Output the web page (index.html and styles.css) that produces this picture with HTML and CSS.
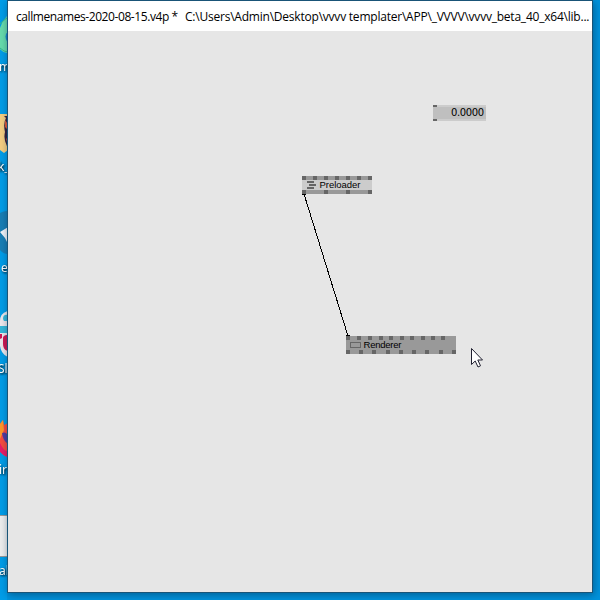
FILE: index.html
```html
<!DOCTYPE html>
<html lang="en">
<head>
<meta charset="utf-8">
<title>callmenames-2020-08-15.v4p</title>
<link rel="stylesheet" href="styles.css">
</head>
<body>
<div class="desktop">
  <svg class="icons" width="7" height="600" viewBox="0 0 7 600">
    <path d="M8 15Q-1 24-1 35V48Q3 53 8 53Z" fill="#66dcac"/>
    <path d="M8 31Q3 36 8 43Z" fill="#1688d0"/><path d="M0 24Q4 20 8 17M0 48Q4 52 8 52" fill="none" stroke="#35b98c"/>
    <path d="M0 114H8V150L4 153 0 150Z" fill="#f5cf82"/><path d="M4 116H8V148Q3 140 5 132 3 123 6 118Z" fill="#33213e"/><path d="M5 120l3 4v6l-3-3zM6 138l2 2v6z" fill="#df5937"/>
    <path d="M0 213Q4 211 8 211V254Q3 254 0 250Z" fill="#187eb5"/><path d="M0 232L8 227V244L5 238Z" fill="#f1f5fa"/>
    <path d="M8 311Q0 313 0 321V346Q1 354 8 357Z" fill="#eee9ed"/><path d="M3 319Q3 314 8 315V321H4ZM0 326H8V333H0Z" fill="#36b8da"/><path d="M3 338Q3 335 8 335V351Q3 350 3 344ZM0 334H2V338L0 339Z" fill="#cf1753"/>
    <path d="M0 424L3 420 4 425 8 423V457Q3 456 0 451Z" fill="#f74c40"/><path d="M0 424L3 420 4 430 0 439Z" fill="#ff9828"/><path d="M2 433Q7 431 8 437V444Q3 441 2 433Z" fill="#513da0"/><path d="M0 452Q4 456 8 457V451Q4 452 0 443Z" fill="#e91c68"/>
    <path d="M0 515H8V556H0Z" fill="#eee"/><path d="M0 515.5H8M0 556.5H8" stroke="#999"/>
    <g class="caption"><text x="-1" y="71">m</text><text x="-2" y="171">k_</text><text x="1" y="272">e</text><text x="-2" y="373">Sl</text><text x="-1" y="474">ir</text><text x="-1" y="575">al</text></g>
  </svg>
  <main class="window">
    <header class="titlebar"><span class="file">callmenames-2020-08-15.v4p *</span><span class="path">C:\Users\Admin\Desktop\vvvv templater\APP\_VVVV\vvvv_beta_40_x64\lib...</span></header>
    <section class="patch">
      <svg class="graph" width="584" height="561" viewBox="8 31 584 561">
        <path d="M304 194L348 336" stroke="#000" fill="none" shape-rendering="crispEdges"/>
        <g shape-rendering="crispEdges">
          <path d="M302 176h70v18h-70z" fill="#999"/><path d="M302 180h70v10h-70z" fill="#ccc"/>
          <path d="M302 176h4v4h-4zm11 0h4v4h-4zm11 0h4v4h-4zm11 0h4v4h-4zm11 0h4v4h-4zm11 0h4v4h-4zm11 0h4v4h-4zM302 190h4v4h-4zm22 0h4v4h-4zm22 0h4v4h-4zm22 0h4v4h-4z" fill="#666"/>
          <path d="M302 194h4v1h-4zM346 335h4v1h-4z"/>
          <path d="M307 181h7v2h-7zm2 3h7v2h-7zm-2 3h7v2h-7z" fill="#666"/>
          <path d="M346 336h110v18H346z" fill="#999"/>
          <path d="M346 336h4v4h-4zm11 0h4v4h-4zm11 0h4v4h-4zm11 0h4v4h-4zm10 0h4v4h-4zm11 0h4v4h-4zm10 0h4v4h-4zm11 0h4v4h-4zm10 0h4v4h-4zm10 0h4v4h-4zM346 350h4v4h-4zm13 0h4v4h-4zm13 0h4v4h-4zm14 0h4v4h-4zm13 0h4v4h-4zm13 0h4v4h-4zm13 0h4v4h-4zm14 0h4v4h-4zm13 0h4v4h-4z" fill="#666"/>
          <path d="M350.5 342.5h10v5h-10z" fill="none" stroke="#666"/>
          <path d="M433 105h53v16h-53z" fill="#ccc"/><path d="M433 107h53v12h-53z" fill="#bfbfbf"/><path d="M433 105h4v2h-4zm0 14h4v2h-4z" fill="#666"/>
        </g>
        <text class="label" x="319.5" y="188" textLength="41">Preloader</text>
        <text class="label" x="363.5" y="348" textLength="38">Renderer</text>
        <text class="value" x="451" y="116" textLength="33">0.0000</text>
        <path d="M471.5 348.5V364.5L475.2 361 478 367 480.5 365.8 477.8 360H482.5Z" fill="#fff" stroke="#202030"/>
      </svg>
    </section>
  </main>
</div>
</body>
</html>
```
FILE: styles.css
```css
body { margin: 0; }
.desktop { width: 600px; height: 600px; display: grid; grid-template-columns: 7px 586px; overflow: hidden; background: #0093dc; }
.icons { background: #009de8; }
.caption { fill: #fff; font: 12px "Noto Sans", sans-serif; filter: drop-shadow(1px 1px 1px #000); }
.window { position: relative; box-sizing: border-box; width: 586px; height: 593px; border: 1px solid #195477; background: #e6e6e6; box-shadow: 1px 2px 8px rgb(0 30 60 / 45%); }
.titlebar { display: flex; align-items: center; height: 30px; padding-left: 8px; background: #fff; color: #000; font: 12px "Open Sans", sans-serif; white-space: pre; }
.file { flex: none; width: 169px; letter-spacing: -.42px; }
.path { letter-spacing: -.22px; }
.graph { display: block; }
.label { font: 9.5px "Liberation Sans", sans-serif; }
.value { font: 10px "DejaVu Sans", sans-serif; }
```
